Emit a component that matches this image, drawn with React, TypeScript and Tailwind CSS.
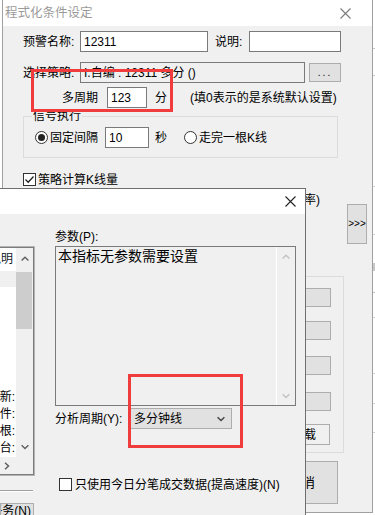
import React from "react";

const Chevron = ({ dir, color = "#606060" }: { dir: "up" | "down" | "right"; color?: string }) => {
  if (dir === "right") {
    return (
      <svg width="6" height="8" viewBox="0 0 6 8">
        <polyline points="1,0.8 4.5,4 1,7.2" fill="none" stroke={color} strokeWidth="1.5" />
      </svg>
    );
  }
  const pts = dir === "up" ? "0.6,4.6 4,1.2 7.4,4.6" : "0.6,1.2 4,4.6 7.4,1.2";
  return (
    <svg width="8" height="6" viewBox="0 0 8 6">
      <polyline points={pts} fill="none" stroke={color} strokeWidth="1.4" />
    </svg>
  );
};

const CloseX = ({ color }: { color: string }) => (
  <svg width="11" height="11" viewBox="0 0 11 11">
    <path d="M0.5 0.5 L10.5 10.5 M10.5 0.5 L0.5 10.5" stroke={color} strokeWidth="1.1" fill="none" />
  </svg>
);

const Radio = ({ checked }: { checked?: boolean }) => (
  <div className="w-[13px] h-[13px] rounded-full border border-[#333333] bg-white flex items-center justify-center shrink-0">
    {checked && <div className="w-[7px] h-[7px] rounded-full bg-[#222222]" />}
  </div>
);

const Check = ({ checked }: { checked?: boolean }) => (
  <div className="w-[13px] h-[13px] border border-[#333333] bg-white flex items-center justify-center shrink-0">
    {checked && (
      <svg width="11" height="11" viewBox="0 0 11 11">
        <polyline points="1.5,5.5 4.2,8.2 9.5,2.5" fill="none" stroke="#222" strokeWidth="1.3" />
      </svg>
    )}
  </div>
);

const Field = ({ w, value, bg = "bg-white" }: { w: string; value?: string; bg?: string }) => (
  <div
    className={`${w} ${bg} h-[21px] border border-[#7a7a7a] pl-[3px] flex items-center whitespace-nowrap overflow-hidden shrink-0`}
  >
    {value}
  </div>
);

export default function App() {
  return (
    <div className="relative w-[375px] h-[515px] overflow-hidden bg-white text-black text-[12px] leading-[14px] font-[family-name:'Liberation_Sans','Noto_Sans_CJK_SC',sans-serif]">
      {/* sliver of the window behind, right edge */}
      <div className="absolute left-[373px] top-0 w-[2px] h-full bg-white flex flex-col">
        <div className="h-[49px] border-b border-[#c8c8c8]" />
        <div className="h-[27px] border-b border-[#c8c8c8]" />
        <div className="h-[84px]" />
        <div className="h-[27px] border-b border-[#d0d0d0]" />
        <div className="h-[48px] border-b border-[#d0d0d0]" />
        <div className="h-[28px]" />
        <div className="h-[8px] bg-[#c8c8c8]" />
        <div className="h-[22px] border-b border-[#c0c0c0]" />
        <div className="h-[25px] border-b border-[#d0d0d0]" />
        <div className="h-[56px] border-b border-[#d0d0d0]" />
        <div className="h-[30px] border-b border-[#d0d0d0]" />
        <div className="h-[29px] border-b border-[#d0d0d0]" />
      </div>

      {/* back window */}
      <div className="absolute left-[2px] top-0 w-[371px] h-[513px] border-x border-b border-[#a0a0a0] flex flex-col">
        <div className="h-[26px] bg-white flex items-center justify-between pl-[2px] pr-[21px] shrink-0">
          <span className="text-[12.5px] text-[#9a9a9a]">程式化条件设定</span>
          <CloseX color="#7a7a7a" />
        </div>
        <div className="flex-1 bg-[#f0f0f0] flex flex-col">
          <div className="mt-[5px] h-[21px] flex items-center pl-[20px]">
            <span className="w-[57px] shrink-0">预警名称:</span>
            <Field w="w-[128px]" value="12311" />
            <span className="ml-[7px] w-[34px] shrink-0">说明:</span>
            <Field w="w-[92px]" />
          </div>
          <div className="mt-[10px] h-[21px] flex items-center pl-[20px]">
            <span className="w-[57px] shrink-0">选择策略:</span>
            <Field w="w-[225px]" bg="bg-[#f0f0f0]" value="I.自编 : 12311 多分 ()" />
            <div className="ml-[4px] w-[32px] h-[19px] bg-[#e1e1e1] border border-[#adadad] flex items-center justify-center text-[10px] tracking-[2px]">
              ...
            </div>
          </div>
          <div className="mt-[4px] h-[21px] flex items-center pl-[59px]">
            <span className="w-[45px] shrink-0">多周期</span>
            <Field w="w-[40px]" value="123" />
            <span className="ml-[8px]">分</span>
            <span className="ml-[23px] whitespace-nowrap">(填0表示的是系统默认设置)</span>
          </div>

          <div className="mt-[8px] ml-[20px] w-[315px] h-[42px] border border-[#dcdcdc] relative pt-[10px] pl-[11px]">
            <span className="absolute -top-[8px] left-[8px] px-[1px] bg-[#f0f0f0]">信号执行</span>
            <div className="h-[21px] flex items-center">
              <Radio checked />
              <span className="ml-[2px] w-[48px]">固定间隔</span>
              <div className="ml-[7px]">
                <Field w="w-[44px]" value="10" />
              </div>
              <span className="ml-[6px]">秒</span>
              <div className="ml-[17px]">
                <Radio />
              </div>
              <span className="ml-[2px]">走完一根K线</span>
            </div>
          </div>

          <div className="mt-[15px] h-[13px] flex items-center pl-[20px]">
            <Check checked />
            <span className="ml-[2px]">策略计算K线量</span>
          </div>

          <div className="flex pr-[5px]">
            <div className="flex-1 flex flex-col items-end">
              <span className="mt-[7px] mr-[24px] whitespace-nowrap">(提高效率)</span>
              <div className="mt-[69px] w-[300px] h-[177px] border border-[#dcdcdc] flex flex-col items-end pt-[11px] pr-[12px]">
                <div className="w-[70px] h-[19px] bg-[#e1e1e1] border border-[#adadad]" />
                <div className="mt-[14px] w-[70px] h-[19px] bg-[#e1e1e1] border border-[#adadad]" />
                <div className="mt-[16px] w-[70px] h-[19px] bg-[#e1e1e1] border border-[#adadad]" />
                <div className="mt-[17px] w-[70px] h-[19px] bg-[#e1e1e1] border border-[#adadad]" />
                <div className="mt-[13px] mr-[1px] w-[52px] h-[21px] bg-[#f0f0f0] border border-[#adadad] flex items-center justify-center">
                  加载
                </div>
              </div>
              <div className="mt-[8px] mr-[6px] w-[72px] h-[43px] bg-[#e1e1e1] border border-[#adadad] flex items-center justify-center text-[13px]">
                取消
              </div>
            </div>
            <div className="ml-[3px] mt-[18px] w-[20px] h-[40px] bg-[#e1e1e1] border border-[#adadad] flex items-center justify-center text-[10px]">
              &gt;&gt;&gt;
            </div>
          </div>
        </div>
      </div>

      {/* front dialog */}
      <div className="absolute left-0 top-[188px] w-[306px] h-[340px] border-t border-r border-[#6f6f6f] flex flex-col">
        <div className="h-[25px] bg-white flex items-center justify-end pr-[9px] shrink-0">
          <CloseX color="#222222" />
        </div>
        <div className="flex-1 bg-[#f0f0f0] flex">
          {/* list column, cut by the screen edge */}
          <div className="w-[35px] shrink-0 flex flex-col">
            <div className="mt-[32px] h-[230px] border-y border-r border-[#b4b4b4]">
              <div className="h-full border-y border-r border-[#7c7c7c] flex flex-col">
                <div className="flex-1 flex overflow-hidden">
                  <div className="w-[16px] bg-white flex flex-col overflow-hidden">
                    <div className="h-[24px] flex items-center justify-end pr-[3px] text-[#101828]">
                      <span className="shrink-0">说明</span>
                    </div>
                    <div className="h-[17px] bg-[#f0f0f0]" />
                    <div className="mt-[102px] leading-[17px] flex flex-col items-end pr-[1px]">
                      <span className="shrink-0 whitespace-nowrap">最新:</span>
                      <span className="shrink-0 whitespace-nowrap">条件:</span>
                      <span className="shrink-0 whitespace-nowrap">线根:</span>
                      <span className="shrink-0 whitespace-nowrap">平台:</span>
                    </div>
                  </div>
                  <div className="w-[17px] bg-[#f0f0f0] flex flex-col">
                    <div className="h-[22px] flex items-center justify-center">
                      <Chevron dir="up" />
                    </div>
                    <div className="mt-[2px] w-[16px] h-[57px] bg-[#cdcdcd]" />
                    <div className="flex-1" />
                    <div className="h-[20px] flex items-center justify-center">
                      <Chevron dir="down" />
                    </div>
                  </div>
                </div>
                <div className="h-[17px] bg-[#f0f0f0] flex items-center pl-[4px] shrink-0">
                  <Chevron dir="right" />
                </div>
              </div>
            </div>
            <div className="mt-[14px] w-[33px] h-[1px] bg-[#a0a0a0]" />
            <div className="w-[33px] h-[1px] bg-white" />
            <div className="mt-[11px] w-[34px] h-[24px] bg-[#e1e1e1] border border-[#adadad] flex justify-end pr-[2px] overflow-hidden">
              <span className="shrink-0 whitespace-nowrap">任务(N)</span>
            </div>
          </div>

          {/* parameters */}
          <div className="ml-[20px] w-[241px] flex flex-col">
            <span className="mt-[16px]">参数(P):</span>
            <div className="mt-[2px] h-[160px] border border-[#7a7a7a] flex">
              <div className="flex-1 pl-[2px] text-[14px] leading-[18px] whitespace-nowrap">本指标无参数需要设置</div>
              <div className="w-[19px] border-l border-white flex flex-col justify-between">
                <div className="h-[20px] flex items-center justify-center">
                  <Chevron dir="up" color="#c2c2c2" />
                </div>
                <div className="h-[18px] flex items-center justify-center">
                  <Chevron dir="down" color="#c2c2c2" />
                </div>
              </div>
            </div>
            <div className="mt-[2px] h-[21px] flex items-center">
              <span className="w-[75px] shrink-0">分析周期(Y):</span>
              <div className="w-[102px] h-[21px] bg-[#e1e1e1] border border-[#adadad] flex items-center justify-between pl-[3px] pr-[6px]">
                <span>多分钟线</span>
                <Chevron dir="down" color="#444444" />
              </div>
            </div>
            <div className="mt-[49px] h-[13px] flex items-center pl-[4px]">
              <Check />
              <span className="ml-[3px] whitespace-nowrap">只使用今日分笔成交数据(提高速度)(N)</span>
            </div>
          </div>
        </div>
      </div>

      {/* red annotation boxes */}
      <div className="absolute left-[31px] top-[69px] w-[142px] h-[43px] border-[3px] border-[#f03c3c]" />
      <div className="absolute left-[128px] top-[374px] w-[115px] h-[74px] border-[3px] border-[#f03c3c]" />
    </div>
  );
}
